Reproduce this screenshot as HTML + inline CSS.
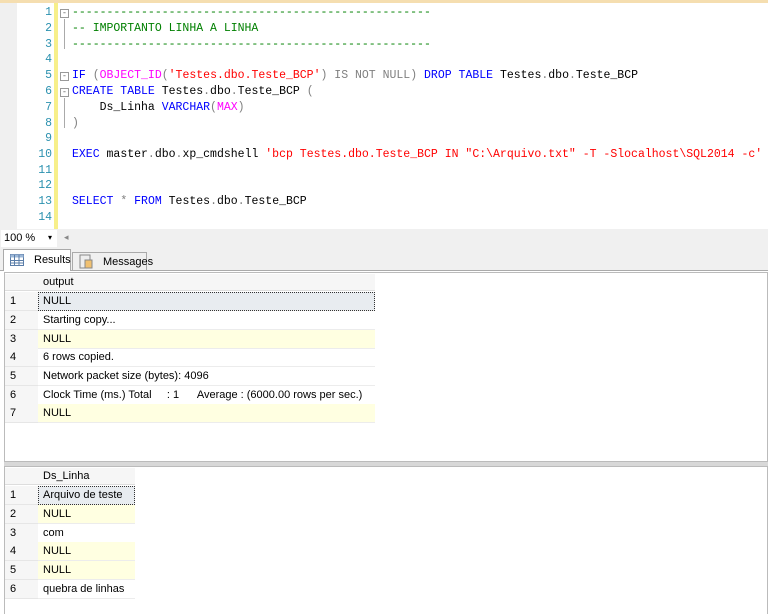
<!DOCTYPE html>
<html><head><style>
*{margin:0;padding:0;box-sizing:border-box}
body{width:768px;height:614px;background:#fff;position:relative;overflow:hidden;font-family:"Liberation Sans",sans-serif}
.ed{position:absolute;left:0;top:0;width:768px;height:229px;background:#fff;border-top:3px solid #f5deb0}
.gut{position:absolute;left:0;top:0;width:17px;height:229px;background:#f0f0f0}
.ybar{position:absolute;left:54px;top:0;width:4px;height:229px;background:#f7ef8a}
.ln{position:absolute;left:20px;width:32px;text-align:right;font:11.5px "Liberation Mono",monospace;color:#2b91af}
.code{position:absolute;left:72px;font:11.5px "Liberation Mono",monospace;white-space:pre;color:#000}
.c{color:#008000}.k{color:#0000ff}.f{color:#ff00ff}.s{color:#ff0000}.g{color:#808080}
.box{position:absolute;left:60px;width:9px;height:9px;border:1px solid #999;background:#fff;font:9px/7px monospace;text-align:center;color:#666}
.vl{position:absolute;left:64px;width:1px;background:#aaa}
.tb{position:absolute;left:0;top:229px;width:768px;height:20px;background:#f0f0f0}
.zoom{position:absolute;left:1px;top:230px;width:56px;height:17px;background:#fff;font-size:11px;padding:2px 3px}
.tabs{position:absolute;left:0;top:249px;width:768px;height:22px;background:#f0f0f0;border-bottom:1px solid #aaa}
.tab{position:absolute;font-size:11px;padding:4px 0 0 30px;height:22px;border:1px solid #aaa;border-bottom:none}
.grid{position:absolute;left:4px;border:1px solid #bbb;background:#fff}
.row{position:absolute;left:0;height:19px;font-size:11px;line-height:19px}
.rn{position:absolute;left:0;width:33px;height:19px;background:#f6f6f6;border-bottom:1px solid #e6e6e6;padding-left:5px}
.cell{position:absolute;left:33px;height:19px;padding-left:5px;border-bottom:1px solid #ececec}
.n{background:#ffffe1}
.sel{background:#e8ecf0;outline:1px dotted #333;outline-offset:-1px}
</style></head><body>
<div class="ed">
<div class="gut"></div><div class="ybar"></div>
<div class="ln" style="top:3px">1</div><div class="ln" style="top:19px">2</div><div class="ln" style="top:35px">3</div><div class="ln" style="top:50px">4</div><div class="ln" style="top:66px">5</div><div class="ln" style="top:82px">6</div><div class="ln" style="top:98px">7</div><div class="ln" style="top:114px">8</div><div class="ln" style="top:129px">9</div><div class="ln" style="top:145px">10</div><div class="ln" style="top:161px">11</div><div class="ln" style="top:176px">12</div><div class="ln" style="top:192px">13</div><div class="ln" style="top:208px">14</div>
<div class="box" style="top:6px">-</div><div class="vl" style="top:16px;height:30px"></div>
<div class="box" style="top:69px">-</div><div class="box" style="top:85px">-</div><div class="vl" style="top:95px;height:30px"></div>
<div class="code" style="top:3px"><span class="c">----------------------------------------------------</span></div>
<div class="code" style="top:19px"><span class="c">-- IMPORTANTO LINHA A LINHA</span></div>
<div class="code" style="top:35px"><span class="c">----------------------------------------------------</span></div>
<div class="code" style="top:66px"><span class="k">IF</span> <span class="g">(</span><span class="f">OBJECT_ID</span><span class="g">(</span><span class="s">'Testes.dbo.Teste_BCP'</span><span class="g">)</span> <span class="g">IS NOT NULL)</span> <span class="k">DROP TABLE</span> Testes<span class="g">.</span>dbo<span class="g">.</span>Teste_BCP</div>
<div class="code" style="top:82px"><span class="k">CREATE TABLE</span> Testes<span class="g">.</span>dbo<span class="g">.</span>Teste_BCP <span class="g">(</span></div>
<div class="code" style="top:98px">    Ds_Linha <span class="k">VARCHAR</span><span class="g">(</span><span class="f">MAX</span><span class="g">)</span></div>
<div class="code" style="top:114px"><span class="g">)</span></div>
<div class="code" style="top:145px"><span class="k">EXEC</span> master<span class="g">.</span>dbo<span class="g">.</span>xp_cmdshell <span class="s">'bcp Testes.dbo.Teste_BCP IN "C:\Arquivo.txt" -T -Slocalhost\SQL2014 -c'</span></div>
<div class="code" style="top:192px"><span class="k">SELECT</span> <span class="g">*</span> <span class="k">FROM</span> Testes<span class="g">.</span>dbo<span class="g">.</span>Teste_BCP</div>
</div>
<div class="tb"></div>
<div class="zoom">100 % <span style="position:absolute;left:47px;top:3px;font-size:8px">▾</span></div>
<div style="position:absolute;left:64px;top:232px;font-size:9px;color:#888">◂</div>
<div class="tabs">
<div class="tab" style="left:3px;top:0;width:68px;background:#fff;height:22px">Results
<svg style="position:absolute;left:6px;top:4px" width="14" height="12"><rect x=".5" y=".5" width="13" height="11" fill="#fff" stroke="#5a7da8"/><rect x=".5" y=".5" width="13" height="3" fill="#9db8d8"/><path d="M4.5 1v11M9 1v11M1 6.5h13M1 9h13" stroke="#5a7da8"/></svg></div>
<div class="tab" style="left:72px;top:3px;width:75px;height:19px;padding-top:3px">Messages
<svg style="position:absolute;left:6px;top:1px" width="14" height="15"><rect x="1" y="1" width="10" height="13" fill="#eee" stroke="#888"/><rect x="6" y="6" width="7" height="8" fill="#f0c070" stroke="#888"/></svg></div>
</div>
<div class="grid" style="top:272px;width:764px;height:190px">
<div class="row" style="top:1px;height:17px;width:370px;background:#f6f6f6;border-bottom:1px solid #ddd"><span style="position:absolute;left:38px;line-height:17px">output</span></div>
<div class="row" style="top:19px"><div class="rn">1</div><div class="cell sel" style="width:337px">NULL</div></div>
<div class="row" style="top:38px"><div class="rn">2</div><div class="cell" style="width:337px">Starting copy...</div></div>
<div class="row" style="top:57px"><div class="rn">3</div><div class="cell n" style="width:337px">NULL</div></div>
<div class="row" style="top:75px"><div class="rn">4</div><div class="cell" style="width:337px">6 rows copied.</div></div>
<div class="row" style="top:94px"><div class="rn">5</div><div class="cell" style="width:337px">Network packet size (bytes): 4096</div></div>
<div class="row" style="top:113px"><div class="rn">6</div><div class="cell" style="width:337px;white-space:pre">Clock Time (ms.) Total     : 1      Average : (6000.00 rows per sec.)</div></div>
<div class="row" style="top:131px"><div class="rn">7</div><div class="cell n" style="width:337px">NULL</div></div>
</div>
<div style="position:absolute;left:4px;top:462px;width:764px;height:4px;background:#d8d8d8"></div>
<div class="grid" style="top:466px;width:764px;height:148px;border-bottom:none">
<div class="row" style="top:1px;height:17px;width:130px;background:#f6f6f6;border-bottom:1px solid #ddd"><span style="position:absolute;left:38px;line-height:17px">Ds_Linha</span></div>
<div class="row" style="top:19px"><div class="rn">1</div><div class="cell sel" style="width:97px">Arquivo de teste</div></div>
<div class="row" style="top:38px"><div class="rn">2</div><div class="cell n" style="width:97px">NULL</div></div>
<div class="row" style="top:57px"><div class="rn">3</div><div class="cell" style="width:97px">com</div></div>
<div class="row" style="top:75px"><div class="rn">4</div><div class="cell n" style="width:97px">NULL</div></div>
<div class="row" style="top:94px"><div class="rn">5</div><div class="cell n" style="width:97px">NULL</div></div>
<div class="row" style="top:113px"><div class="rn">6</div><div class="cell" style="width:97px">quebra de linhas</div></div>
</div>
</body></html>
